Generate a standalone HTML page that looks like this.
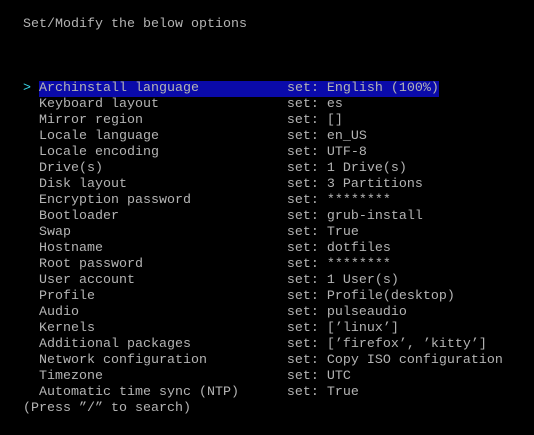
<!DOCTYPE html>
<html><head><meta charset="utf-8"><style>
html,body{margin:0;padding:0;background:#000;width:534px;height:435px;overflow:hidden}
pre{position:absolute;left:-1px;top:1px;margin:0;font-family:"Liberation Mono","DejaVu Sans Mono",monospace;font-size:13.33px;line-height:16px;color:#b4b4b4;white-space:pre}
.h{background:#0a0aaa;display:inline-block;height:16px;vertical-align:top}
.c{color:#3ad8e8}
</style></head><body>
<pre>

   Set/Modify the below options



   <span class="c">&gt;</span> <span class="h">Archinstall language           set: English (100%)</span>
     Keyboard layout                set: es
     Mirror region                  set: []
     Locale language                set: en_US
     Locale encoding                set: UTF-8
     Drive(s)                       set: 1 Drive(s)
     Disk layout                    set: 3 Partitions
     Encryption password            set: ********
     Bootloader                     set: grub-install
     Swap                           set: True
     Hostname                       set: dotfiles
     Root password                  set: ********
     User account                   set: 1 User(s)
     Profile                        set: Profile(desktop)
     Audio                          set: pulseaudio
     Kernels                        set: [’linux’]
     Additional packages            set: [’firefox’, ’kitty’]
     Network configuration          set: Copy ISO configuration
     Timezone                       set: UTC
     Automatic time sync (NTP)      set: True
   (Press ”/” to search)
</pre>
</body></html>
